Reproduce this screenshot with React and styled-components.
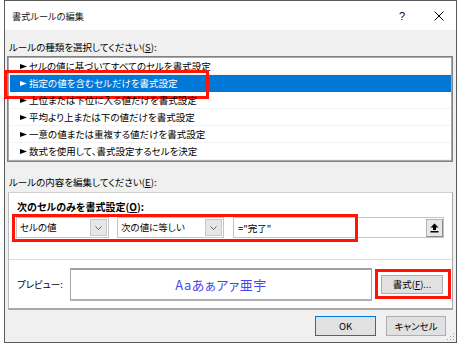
import React from 'react';
import styled, { createGlobalStyle } from 'styled-components';

const Global = createGlobalStyle`
  html, body { margin: 0; padding: 0; background: #ffffff; }
  body { font-family: "Noto Sans CJK JP", "Noto Sans", sans-serif; }
`;

const RED = '#ff1406';

const Dialog = styled.div`
  position: relative;
  box-sizing: border-box;
  margin-left: 4px;
  width: 453px;
  height: 343px;
  border: 1px solid #5a5a5a;
  background: #f0f0f0;
  display: flex;
  flex-direction: column;
  font-size: 9.5px;
  font-feature-settings: "palt";
  color: #000;
`;

const TitleBar = styled.div`
  height: 29px;
  background: #fff;
  display: flex;
  align-items: center;
  padding-left: 7px;
`;

const TitleText = styled.div`
  flex: 1;
  font-size: 9.2px;
  color: #111;
`;

const TitleButton = styled.div`
  width: ${p => p.$w}px;
  height: 29px;
  display: flex;
  align-items: center;
  justify-content: center;
  font-family: "Liberation Sans", sans-serif;
  font-size: 11px;
`;

const Body = styled.div`
  flex: 1;
  display: flex;
  flex-direction: column;
  padding: 0 3px 0 2px;
`;

const Label = styled.div`
  margin: ${p => p.$mt}px 0 0 2px;
  height: 17px;
  line-height: 17px;
  white-space: nowrap;
`;

const U = styled.span`
  text-decoration: underline;
  text-underline-offset: 1px;
`;

const ListBox = styled.div`
  height: 106px;
  box-sizing: border-box;
  background: #fff;
  border: 1px solid #828282;
  box-shadow: inset 1px 1px 0 #a8a8a8, inset -1px -1px 0 #a8a8a8;
  padding: 1px;
  display: flex;
  flex-direction: column;
`;

const Item = styled.div`
  position: relative;
  height: 16px;
  border-bottom: 1px solid ${p => (p.$sel ? '#0078d7' : '#f3f3f3')};
  margin-left: 1px;
  padding-left: 10px;
  display: flex;
  align-items: center;
  white-space: nowrap;
  background: ${p => (p.$sel ? '#0078d7' : 'transparent')};
  color: ${p => (p.$sel ? '#fff' : '#000')};
`;

const Marker = styled.svg`
  width: 7px;
  height: 5px;
  margin-right: 2px;
  flex: none;
`;

const Annot = styled.div`
  position: absolute;
  box-sizing: border-box;
  border: 3px solid ${RED};
  left: ${p => p.$l}px;
  top: ${p => p.$t}px;
  width: ${p => p.$w}px;
  height: ${p => p.$h}px;
  pointer-events: none;
`;

const Group = styled.div`
  margin: 1px 0 0 1px;
  height: 118px;
  box-sizing: border-box;
  background: #fff;
  border-top: 1px solid #cfcfcf;
  border-left: 1px solid #bcbcbc;
  border-right: 1px solid #a8a8a8;
  border-bottom: 2px solid #a8a8a8;
  display: flex;
  flex-direction: column;
`;

const TopSection = styled.div`
  padding: 5px 0 0 7px;
  height: 61px;
  border-bottom: 1px solid #dcdcdc;
`;

const BoldLabel = styled.div`
  font-weight: bold;
  font-size: 10px;
  height: 17px;
  line-height: 17px;
  margin-left: 1px;
`;

const FieldRow = styled.div`
  position: relative;
  margin-top: 2px;
  display: flex;
  height: 21px;
`;

const Combo = styled.div`
  box-sizing: border-box;
  width: ${p => p.$w}px;
  height: 21px;
  margin-right: ${p => p.$gap}px;
  border: 1px solid #c4c4c4;
  background: #fff;
  display: flex;
  align-items: stretch;
`;

const ComboText = styled.div`
  flex: 1;
  padding-left: 3px;
  line-height: 19px;
  white-space: nowrap;
  overflow: hidden;
`;

const ComboButton = styled.div`
  width: 15px;
  margin: 1px;
  background: #e6e6e6;
  border: 1px solid #c8c8c8;
  display: flex;
  align-items: center;
  justify-content: center;
`;

const TextBox = styled.div`
  box-sizing: border-box;
  width: 211px;
  height: 21px;
  border: 1px solid #c4c4c4;
  background: #fff;
  display: flex;
  align-items: center;
`;

const TextValue = styled.div`
  flex: 1;
  padding-left: 4px;
`;

const CollapseButton = styled.div`
  box-sizing: border-box;
  width: 17px;
  height: 18px;
  background: #e8e8e8;
  border: 1px solid #b4b4b4;
  border-right-color: #8a8a8a;
  border-bottom-color: #8a8a8a;
  display: flex;
  align-items: center;
  justify-content: center;
`;

const PreviewSection = styled.div`
  flex: 1;
  display: flex;
  align-items: center;
  padding: 0 0 0 8px;
`;

const PreviewLabel = styled.div`
  width: 53px;
  white-space: nowrap;
`;

const PreviewBox = styled.div`
  box-sizing: border-box;
  width: 302px;
  height: 33px;
  border: 1px solid #a8a8a8;
  border-top: 2px solid #a0a0a0;
  border-bottom: 2px solid #b0b0b0;
  background: #fff;
  display: flex;
  align-items: center;
  justify-content: center;
  color: #4848ee;
  font-size: 13px;
  letter-spacing: 0.5px;
  margin-right: 9px;
`;

const Button = styled.div`
  position: relative;
  box-sizing: border-box;
  width: ${p => p.$w}px;
  height: ${p => p.$h || 20}px;
  background: #e1e1e1;
  border: 1px solid ${p => (p.$default ? '#0078d7' : '#adadad')};
  display: flex;
  align-items: center;
  justify-content: center;
  white-space: nowrap;
`;

const ButtonRow = styled.div`
  display: flex;
  justify-content: flex-end;
  gap: 10px;
  margin: 6px 7px 0 0;
`;

const Grip = styled.svg`
  position: absolute;
  right: 1px;
  bottom: 1px;
`;

const items = [
  'セルの値に基づいてすべてのセルを書式設定',
  '指定の値を含むセルだけを書式設定',
  '上位または下位に入る値だけを書式設定',
  '平均より上または下の値だけを書式設定',
  '一意の値または重複する値だけを書式設定',
  '数式を使用して、書式設定するセルを決定',
];

const Chevron = () => (
  <svg width="7" height="4" viewBox="0 0 7 4">
    <polyline points="0.5,0.5 3.5,3.5 6.5,0.5" fill="none" stroke="#606060" strokeWidth="1" />
  </svg>
);

export default function App() {
  return (
    <>
      <Global />
      <Dialog>
        <TitleBar>
          <TitleText>書式ルールの編集</TitleText>
          <TitleButton $w={40}>?</TitleButton>
          <TitleButton $w={34}>
            <svg width="10" height="10" viewBox="0 0 10 10">
              <path d="M0.5 0.5 L9.5 9.5 M9.5 0.5 L0.5 9.5" stroke="#000" strokeWidth="1" />
            </svg>
          </TitleButton>
        </TitleBar>
        <Body>
          <Label $mt={9}>
            ルールの種類を選択してください(<U>S</U>):
          </Label>
          <ListBox>
            {items.map((t, i) => (
              <Item key={i} $sel={i === 1}>
                <Marker viewBox="0 0 7 5">
                  <polygon points="0,0 7,2.5 0,5" fill={i === 1 ? '#fff' : '#000'} />
                </Marker>
                {t}
                {i === 1 && <Annot $l={-6} $t={-5} $w={205} $h={29} />}
              </Item>
            ))}
          </ListBox>
          <Label $mt={12}>
            ルールの内容を編集してください(<U>E</U>):
          </Label>
          <Group>
            <TopSection>
              <BoldLabel>
                次のセルのみを書式設定(<U>O</U>):
              </BoldLabel>
              <FieldRow>
                <Combo $w={93} $gap={8}>
                  <ComboText>セルの値</ComboText>
                  <ComboButton><Chevron /></ComboButton>
                </Combo>
                <Combo $w={107} $gap={9}>
                  <ComboText>次の値に等しい</ComboText>
                  <ComboButton><Chevron /></ComboButton>
                </Combo>
                <TextBox>
                  <TextValue>="完了"</TextValue>
                  <CollapseButton>
                    <svg width="9" height="10" viewBox="0 0 9 10">
                      <path d="M4.5 0.5 L8.5 4.5 L6 4.5 L6 7 L3 7 L3 4.5 L0.5 4.5 Z" fill="#000" />
                      <rect x="0.5" y="8" width="8" height="1.5" fill="#000" />
                    </svg>
                  </CollapseButton>
                </TextBox>
                <Annot $l={-4} $t={-3} $w={346} $h={28} />
              </FieldRow>
            </TopSection>
            <PreviewSection>
              <PreviewLabel>プレビュー:</PreviewLabel>
              <PreviewBox>Aaあぁアァ亜宇</PreviewBox>
              <Button $w={62} $h={19}>
                書式(<U>F</U>)...
                <Annot $l={-7} $t={-7} $w={76} $h={30} />
              </Button>
            </PreviewSection>
          </Group>
          <ButtonRow>
            <Button $w={61} $default>OK</Button>
            <Button $w={60}>キャンセル</Button>
          </ButtonRow>
        </Body>
        <Grip width="10" height="10" viewBox="0 0 10 10">
          {[[8, 2], [8, 5], [5, 5], [8, 8], [5, 8], [2, 8]].map(([x, y], i) => (
            <rect key={i} x={x} y={y} width="1" height="1" fill="#a0a0a0" />
          ))}
        </Grip>
      </Dialog>
    </>
  );
}
